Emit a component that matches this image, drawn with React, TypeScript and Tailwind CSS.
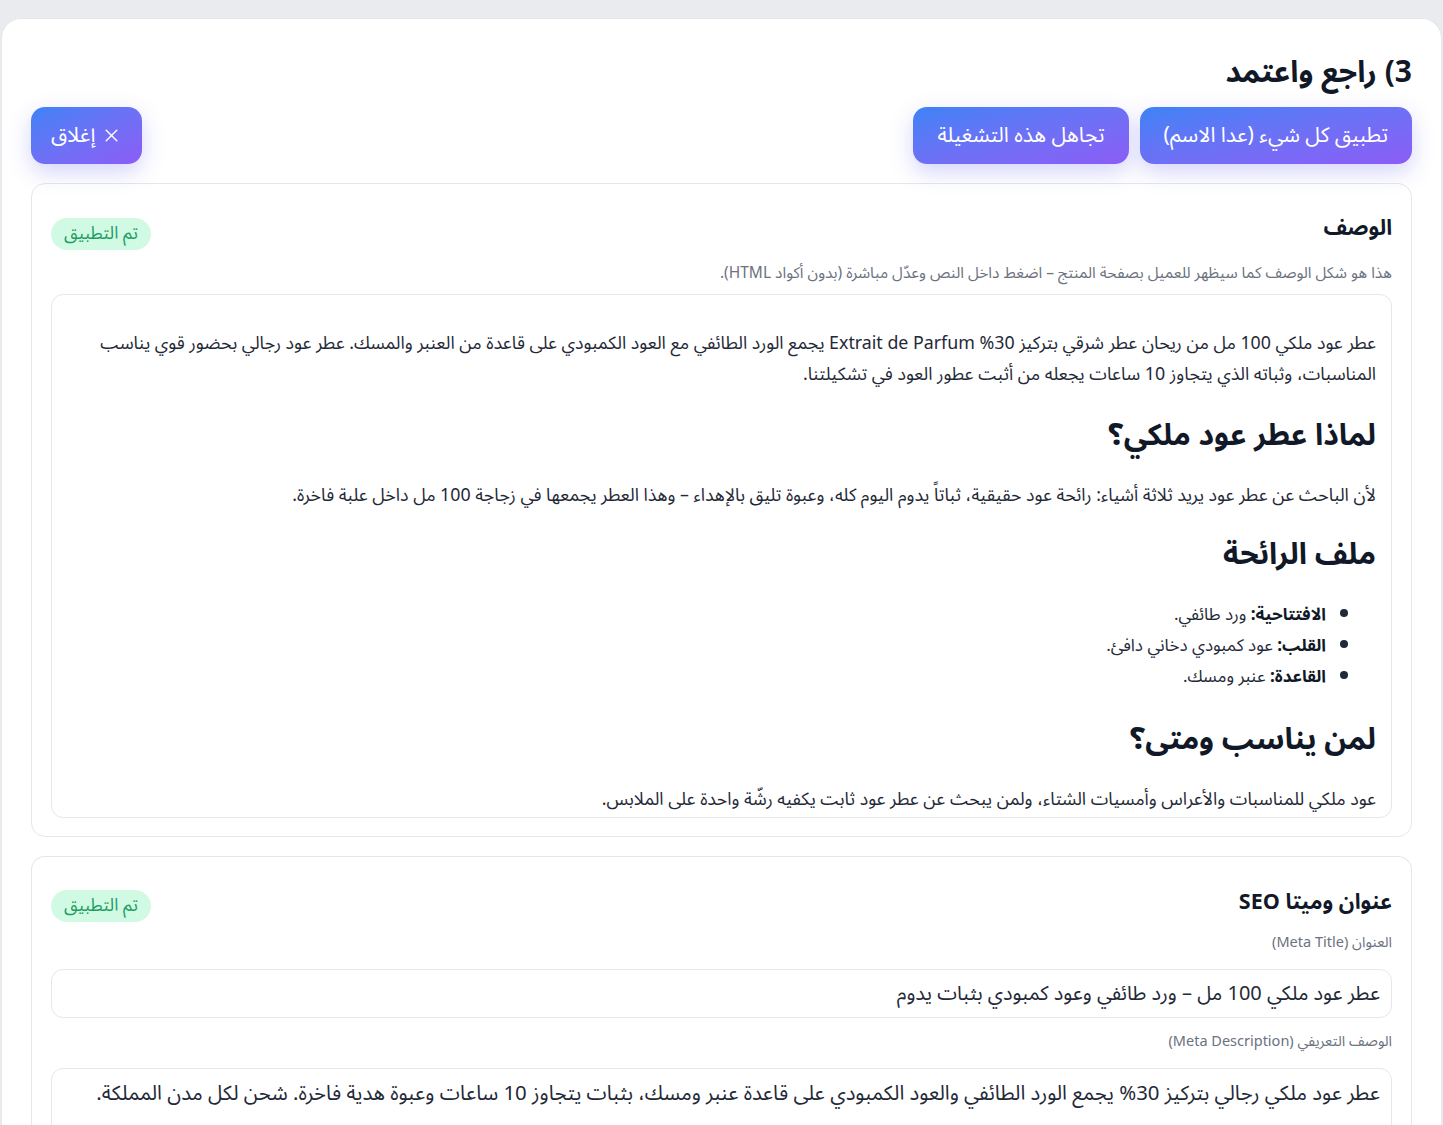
import { X } from "lucide-react";

const font = "font-['Noto_Sans_Arabic','Noto_Sans','DejaVu_Sans',sans-serif]";

function AppliedBadge() {
  return (
    <span className="inline-flex h-[32px] items-center rounded-full bg-[#d1fae5] px-[13px] text-[17.5px] leading-none text-[#1f9d63]">
      تم التطبيق
    </span>
  );
}

function GradientButton({ children, className = "" }: { children: React.ReactNode; className?: string }) {
  return (
    <button
      className={`inline-flex h-[57px] items-center justify-center gap-[6px] rounded-[14px] bg-linear-to-br from-[#3b82f6] to-[#8b5cf6] text-[21px] text-white shadow-[0_8px_22px_rgba(99,102,241,0.28)] ${className}`}
    >
      {children}
    </button>
  );
}

export default function App() {
  return (
    <div dir="rtl" className={`${font} min-h-screen bg-[#e9ebee] px-[1px] pt-[18px] text-[#1f2937]`}>
      <div className="min-h-[1107px] rounded-t-[20px] border border-b-0 border-[#e5e7eb] bg-white px-[29px] pt-[36px]">
        {/* Title */}
        <h1 className="text-[30px] font-bold leading-[36px] text-[#111827]">3) راجع واعتمد</h1>

        {/* Actions */}
        <div className="mt-[16px] flex items-center justify-between">
          <div className="flex gap-[11px]">
            <GradientButton className="px-[24px]">تطبيق كل شيء (عدا الاسم)</GradientButton>
            <GradientButton className="px-[24px]">تجاهل هذه التشغيلة</GradientButton>
          </div>
          <GradientButton className="px-[20px]">
            <X size={21} strokeWidth={1.7} />
            إغلاق
          </GradientButton>
        </div>

        {/* Description */}
        <section className="mt-[19px] rounded-[14px] border border-[#e5e7eb] px-[19px] pb-[18px] pt-[34px]">
          <div className="flex items-start justify-between">
            <h3 className="text-[21.5px] font-bold leading-[20px] text-[#111827]">الوصف</h3>
            <AppliedBadge />
          </div>
          <p className="mt-[14px] text-[15.5px] leading-[18px] text-[#6b7280]">
            هذا هو شكل الوصف كما سيظهر للعميل بصفحة المنتج – اضغط داخل النص وعدّل مباشرة (بدون أكواد HTML).
          </p>
          <div className="mt-[12px] h-[524px] overflow-hidden rounded-[12px] border border-[#e5e7eb] px-[15px] pt-[33px] text-[17.8px] leading-[31px] text-[#1f2937]">
            <p>
              عطر عود ملكي 100 مل من ريحان عطر شرقي بتركيز 30% Extrait de Parfum يجمع الورد الطائفي مع العود الكمبودي على قاعدة من العنبر والمسك. عطر عود رجالي بحضور قوي يناسب المناسبات، وثباته الذي يتجاوز 10 ساعات يجعله من أثبت عطور العود في تشكيلتنا.
            </p>
            <h2 className="mt-[28px] text-[30px] font-bold leading-[36px] text-[#111827]">لماذا عطر عود ملكي؟</h2>
            <p className="mt-[26px]">
              لأن الباحث عن عطر عود يريد ثلاثة أشياء: رائحة عود حقيقية، ثباتاً يدوم اليوم كله، وعبوة تليق بالإهداء – وهذا العطر يجمعها في زجاجة 100 مل داخل علبة فاخرة.
            </p>
            <h2 className="mt-[26px] text-[30px] font-bold leading-[36px] text-[#111827]">ملف الرائحة</h2>
            <ul className="mt-[27px] list-disc ps-[50px] text-[17px]">
              <li className="h-[31px]">
                <strong className="font-bold text-[#111827]">الافتتاحية:</strong> ورد طائفي.
              </li>
              <li className="h-[31px]">
                <strong className="font-bold text-[#111827]">القلب:</strong> عود كمبودي دخاني دافئ.
              </li>
              <li className="h-[31px]">
                <strong className="font-bold text-[#111827]">القاعدة:</strong> عنبر ومسك.
              </li>
            </ul>
            <h2 className="mt-[29px] text-[30px] font-bold leading-[36px] text-[#111827]">لمن يناسب ومتى؟</h2>
            <p className="mt-[26px]">
              عود ملكي للمناسبات والأعراس وأمسيات الشتاء، ولمن يبحث عن عطر عود ثابت يكفيه رشّة واحدة على الملابس.
            </p>
          </div>
        </section>

        {/* SEO */}
        <section className="mt-[19px] rounded-t-[14px] border border-b-0 border-[#e5e7eb] px-[19px] pt-[33px]">
          <div className="flex items-start justify-between">
            <h3 className="mt-[2px] text-[21.5px] font-bold leading-[20px] text-[#111827]">عنوان وميتا SEO</h3>
            <AppliedBadge />
          </div>
          <label className="mt-[12px] block text-[14.5px] leading-[18px] text-[#6b7280]">العنوان (Meta Title)</label>
          <div className="mt-[17px] flex h-[49px] items-center rounded-[12px] border border-[#e5e7eb] px-[11px] text-[20px] text-[#1f2937]">
            عطر عود ملكي 100 مل – ورد طائفي وعود كمبودي بثبات يدوم
          </div>
          <label className="mt-[15px] block text-[14.5px] leading-[18px] text-[#6b7280]">الوصف التعريفي (Meta Description)</label>
          <div className="mt-[17px] h-[90px] rounded-[12px] border border-[#e5e7eb] px-[11px] pt-[10px] text-[20.4px] leading-[30px] text-[#1f2937]">
            عطر عود ملكي رجالي بتركيز 30% يجمع الورد الطائفي والعود الكمبودي على قاعدة عنبر ومسك، بثبات يتجاوز 10 ساعات وعبوة هدية فاخرة. شحن لكل مدن المملكة.
          </div>
        </section>
      </div>
    </div>
  );
}
